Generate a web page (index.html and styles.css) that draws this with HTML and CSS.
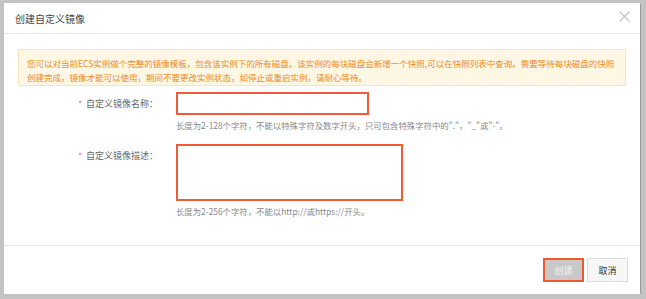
FILE: index.html
```html
<!DOCTYPE html>
<html lang="zh-CN">
<head>
<meta charset="utf-8">
<title>创建自定义镜像</title>
<link rel="stylesheet" href="styles.css">
</head>
<body>
<div class="dialog">
  <div class="dialog-header">
    <span class="dialog-title">创建自定义镜像</span>
    <svg class="close" width="11" height="11" viewBox="0 0 11 11"><path d="M0.5 0.5 L10.5 10.5 M10.5 0.5 L0.5 10.5" stroke="#c4c4c4" stroke-width="1.2" fill="none"/></svg>
  </div>
  <div class="dialog-body">
    <div class="alert">您可以对当前ECS实例做个完整的镜像模板，包含该实例下的所有磁盘。该实例的每块磁盘会新增一个快照,可以在快照列表中查询。需要等待每块磁盘的快照<br>创建完成，镜像才能可以使用，期间不要更改实例状态，如停止或重启实例，请耐心等待。</div>
    <div class="form">
      <div class="label label-input"><span class="req">*</span>自定义镜像名称：</div>
      <div class="field">
        <input class="input" type="text">
        <div class="hint">长度为2-128个字符，不能以特殊字符及数字开头，只可包含特殊字符中的"."，"_"或"-"。</div>
      </div>
      <div class="label label-area"><span class="req">*</span>自定义镜像描述：</div>
      <div class="field">
        <textarea class="textarea"></textarea>
        <div class="hint">长度为2-256个字符，不能以http://或https://开头。</div>
      </div>
    </div>
  </div>
  <div class="dialog-footer">
    <button class="btn btn-primary">创建</button>
    <button class="btn btn-default">取消</button>
  </div>
</div>
</body>
</html>
```

FILE: styles.css
```css
html, body {
  margin: 0;
  padding: 0;
  background: #c3c3c3;
  font-family: "Noto Sans CJK SC", "Noto Sans", sans-serif;
}

.dialog {
  margin: 3px 0 0 4px;
  width: 636px;
  height: 291px;
  background: #fff;
  display: flex;
  flex-direction: column;
  box-shadow: 1px 1px 0 #9a9a9a;
}

.dialog-header {
  height: 30px;
  border-bottom: 1px solid #e6e6e6;
  display: flex;
  align-items: center;
  justify-content: space-between;
  padding: 0 10px 0 11px;
}

.dialog-title {
  font-size: 10px;
  color: #444;
}

.close {
  display: block;
  margin-top: -3px;
}

.dialog-body {
  flex: 1;
  padding: 15px 14px 0 14px;
}

.alert {
  background: #fdf7e4;
  border: 1px solid #f6e6bf;
  color: #ef8a22;
  font-size: 8.5px;
  line-height: 14px;
  padding: 6px 8px 1px 8px;
  white-space: nowrap;
}

.form {
  margin-top: 6px;
  display: grid;
  grid-template-columns: 140px 1fr;
  column-gap: 18px;
  row-gap: 12px;
}

.label {
  text-align: right;
  font-size: 9px;
  color: #666;
}

.label-input {
  line-height: 23px;
}

.label-area {
  line-height: 14px;
  padding-top: 5px;
}

.req {
  color: #f05a5a;
  margin-right: 4px;
  font-size: 8px;
}

.field {
  display: flex;
  flex-direction: column;
  align-items: flex-start;
}

.input {
  box-sizing: border-box;
  width: 193px;
  height: 23px;
  border: 2px solid #f25b35;
  margin: 0;
  padding: 0 4px;
  background: #fff;
  outline: none;
}

.textarea {
  box-sizing: border-box;
  width: 227px;
  height: 57px;
  border: 2px solid #f25b35;
  margin: 0;
  padding: 4px;
  resize: none;
  background: #fff;
  outline: none;
  display: block;
}

.hint {
  margin-top: 3px;
  font-size: 8.4px;
  line-height: 14px;
  color: #888;
  white-space: nowrap;
}

.dialog-footer {
  height: 49px;
  border-top: 1px solid #e6e6e6;
  display: flex;
  justify-content: flex-end;
  align-items: flex-start;
  gap: 3px;
  padding: 12px 12px 0 0;
  box-sizing: border-box;
}

.btn {
  box-sizing: border-box;
  width: 41px;
  height: 24px;
  font-family: "Noto Sans CJK SC", "Noto Sans", sans-serif;
  font-size: 9px;
  padding: 0;
  margin: 0;
  cursor: pointer;
}

.btn-primary {
  background: #c9c9c9;
  border: 2px solid #f0582f;
  color: #f2f2f2;
}

.btn-default {
  background: #f7f7f7;
  border: 1px solid #dcdcdc;
  color: #333;
}
```
